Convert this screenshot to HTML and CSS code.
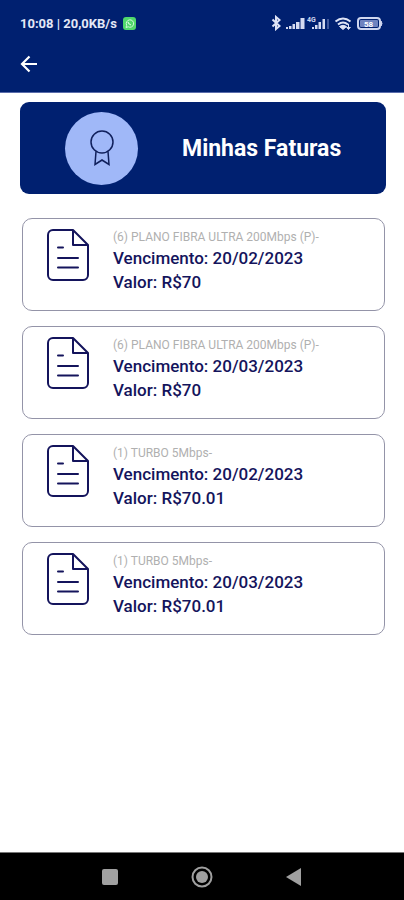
FILE: index.html
```
<!DOCTYPE html>
<html lang="pt-BR">
<head>
<meta charset="utf-8">
<meta name="viewport" content="width=device-width, initial-scale=1">
<title>Minhas Faturas</title>
<link rel="stylesheet" href="styles.css">
</head>
<body>
<svg class="defs" width="0" height="0" aria-hidden="true">
  <symbol id="doc" viewBox="0 0 42 52">
    <path d="M26 1H6a5 5 0 0 0-5 5v40a5 5 0 0 0 5 5h30a5 5 0 0 0 5-5V16zM26 1v15h15M11 18.500h5M11 29h20M11 38.500h20" fill="none" stroke="currentColor" stroke-width="2" stroke-linecap="round" stroke-linejoin="round"/>
  </symbol>
</svg>
<header class="top">
  <div class="status">
    <span class="clock">10:08 | 20,0KB/s</span>
    <svg class="chat" width="13" height="13" viewBox="0 0 13 13" aria-hidden="true">
      <rect width="13" height="13" rx="3" fill="#4fd86b"/>
      <path d="M3 10.500l.7-2.200a3.700 3.700 0 1 1 1.500 1.500z" fill="none" stroke="#d5f8dc" stroke-width="1"/>
      <path d="M5 5q.6 2.400 3 3" fill="none" stroke="#d5f8dc" stroke-width="1.200"/>
    </svg>
    <svg class="signals" width="113" height="16" viewBox="0 0 113 16" aria-hidden="true">
      <path d="M1.500 4.500l7 6.500L5 14V2l3.500 3-7 6.500" fill="none" stroke="#dfe4f6" stroke-width="2"/>
      <path d="M15 12h2v2h-2zM18 11h2.500v3h-2.500zM21.500 9h2.500v5h-2.500zM25 7h3.500v7h-3.500zM29.500 3h4v11h-4zM41 12h2v2h-2zM44 10h2.500v4h-2.500zM47.500 7h2.500v7h-2.500zM51.500 4h2.500v10h-2.500z" fill="#d5dbf1"/>
      <path d="M56 4h2v10h-2z" fill="#40589c"/>
      <text x="36" y="7" class="net">4G</text>
      <g fill="none" stroke="#dfe4f6" stroke-width="2">
        <path d="M64.500 6.500q7.500-6 15 0M67 9.500q5-4 10 0"/>
      </g>
      <path d="M68.500 11.500q3.500-2.500 7 0l-3.500 3zM77.500 9v5M75.500 12l2 2.500 2-2.500" fill="#dfe4f6" stroke="#dfe4f6"/>
      <rect x="87" y="3" width="22" height="11" rx="3" fill="none" stroke="#cfd6ef" stroke-width="2"/>
      <rect x="89" y="5" width="18" height="7" rx="1" fill="#6f83bf"/>
      <path d="M110 6q2 2.500 0 5z" fill="#cfd6ef" stroke="#cfd6ef"/>
      <text x="93" y="12" class="charge">58</text>
    </svg>
  </div>
  <button class="back" type="button" aria-label="Voltar">
    <svg width="18" height="18" viewBox="0 0 18 18" aria-hidden="true"><path d="M17 9H2M9.500 1.500L2 9l7.500 7.500" fill="none" stroke="#fff" stroke-width="2.200"/></svg>
  </button>
</header>
<main class="content">
  <section class="banner">
    <span class="badge">
      <svg width="26" height="36" viewBox="0 0 26 36" aria-hidden="true"><g fill="none" stroke="#10205c" stroke-width="1.500"><circle cx="13" cy="12" r="11"/><path d="M7 21.500L6 34.500l7-4.500 7 4.500-1-13"/></g></svg>
    </span>
    <h1>Minhas Faturas</h1>
  </section>
  <ul class="bills">
    <li class="bill"><svg class="doc" aria-hidden="true"><use href="#doc"/></svg><div><p class="plan">(6) PLANO FIBRA ULTRA 200Mbps (P)-</p><p class="line">Vencimento: 20/02/2023</p><p class="line">Valor: R$70</p></div></li>
    <li class="bill"><svg class="doc" aria-hidden="true"><use href="#doc"/></svg><div><p class="plan">(6) PLANO FIBRA ULTRA 200Mbps (P)-</p><p class="line">Vencimento: 20/03/2023</p><p class="line">Valor: R$70</p></div></li>
    <li class="bill"><svg class="doc" aria-hidden="true"><use href="#doc"/></svg><div><p class="plan">(1) TURBO 5Mbps-</p><p class="line">Vencimento: 20/02/2023</p><p class="line">Valor: R$70.01</p></div></li>
    <li class="bill"><svg class="doc" aria-hidden="true"><use href="#doc"/></svg><div><p class="plan">(1) TURBO 5Mbps-</p><p class="line">Vencimento: 20/03/2023</p><p class="line">Valor: R$70.01</p></div></li>
  </ul>
</main>
<nav class="system">
  <button type="button" aria-label="Recentes"><svg width="22" height="22" viewBox="0 0 22 22"><rect x="3" y="3" width="16" height="16" rx="2" fill="#a0a0a0"/></svg></button>
  <button type="button" aria-label="Início"><svg width="22" height="22" viewBox="0 0 22 22"><circle cx="11" cy="11" r="9.500" fill="none" stroke="#a0a0a0" stroke-width="2"/><circle cx="11" cy="11" r="6" fill="#a0a0a0"/></svg></button>
  <button type="button" aria-label="Voltar"><svg width="22" height="22" viewBox="0 0 22 22"><path d="M18 2v18L3 11z" fill="#a0a0a0"/></svg></button>
</nav>
</body>
</html>
```
FILE: styles.css
```
* {
  box-sizing: border-box;
}

body {
  margin: 0;
  min-height: 100vh;
  display: flex;
  flex-direction: column;
  background: #fff;
  color: #14145c;
  font-family: Roboto, "Liberation Sans", sans-serif;
}

h1, p, ul {
  margin: 0;
  padding: 0;
}

svg {
  display: block;
}

button {
  padding: 0;
  border: 0;
  background: none;
}

.defs {
  position: absolute;
}

.top {
  padding: 15px 20px 19px;
  background: #002070;
  border-bottom: 1px solid #5a6cab;
}

.status {
  display: flex;
  align-items: center;
  height: 16px;
}

.clock {
  color: #e4e8f7;
  font-size: 13px;
  font-weight: 700;
}

.chat {
  margin-left: 6px;
}

.signals {
  margin-left: auto;
}

.net {
  fill: #cfd6ef;
  font-size: 7px;
  font-weight: 700;
}

.charge {
  fill: #fff;
  font-size: 8px;
  font-weight: 700;
}

.back {
  display: block;
  margin-top: 24px;
}

.content {
  flex: 1;
  padding: 9px 18px 24px 20px;
}

.banner {
  display: flex;
  align-items: center;
  height: 92px;
  padding-left: 45px;
  border-radius: 9px;
  background: #002070;
}

.badge {
  display: grid;
  flex: none;
  place-items: center;
  width: 73px;
  height: 73px;
  border-radius: 50%;
  background: #a0b8f8;
}

.banner h1 {
  margin-left: 44px;
  color: #fff;
  font-size: 23px;
  font-weight: 700;
}

.bills {
  display: grid;
  gap: 15px;
  margin: 24px 1px 0 2px;
  list-style: none;
}

.bill {
  display: flex;
  gap: 24px;
  padding: 10px 24px 16px;
  border: 1px solid #9494a8;
  border-radius: 10px;
}

.doc {
  width: 42px;
  height: 52px;
  color: #14145c;
}

.plan {
  color: #b0b0b0;
  font-size: 12px;
  line-height: 17px;
}

.line {
  font-size: 17px;
  font-weight: 500;
  line-height: 24px;
}

.system {
  display: flex;
  justify-content: space-between;
  align-items: center;
  height: 48px;
  padding: 0 99px;
  border-top: 1px solid #777;
  background: #000;
}
```
